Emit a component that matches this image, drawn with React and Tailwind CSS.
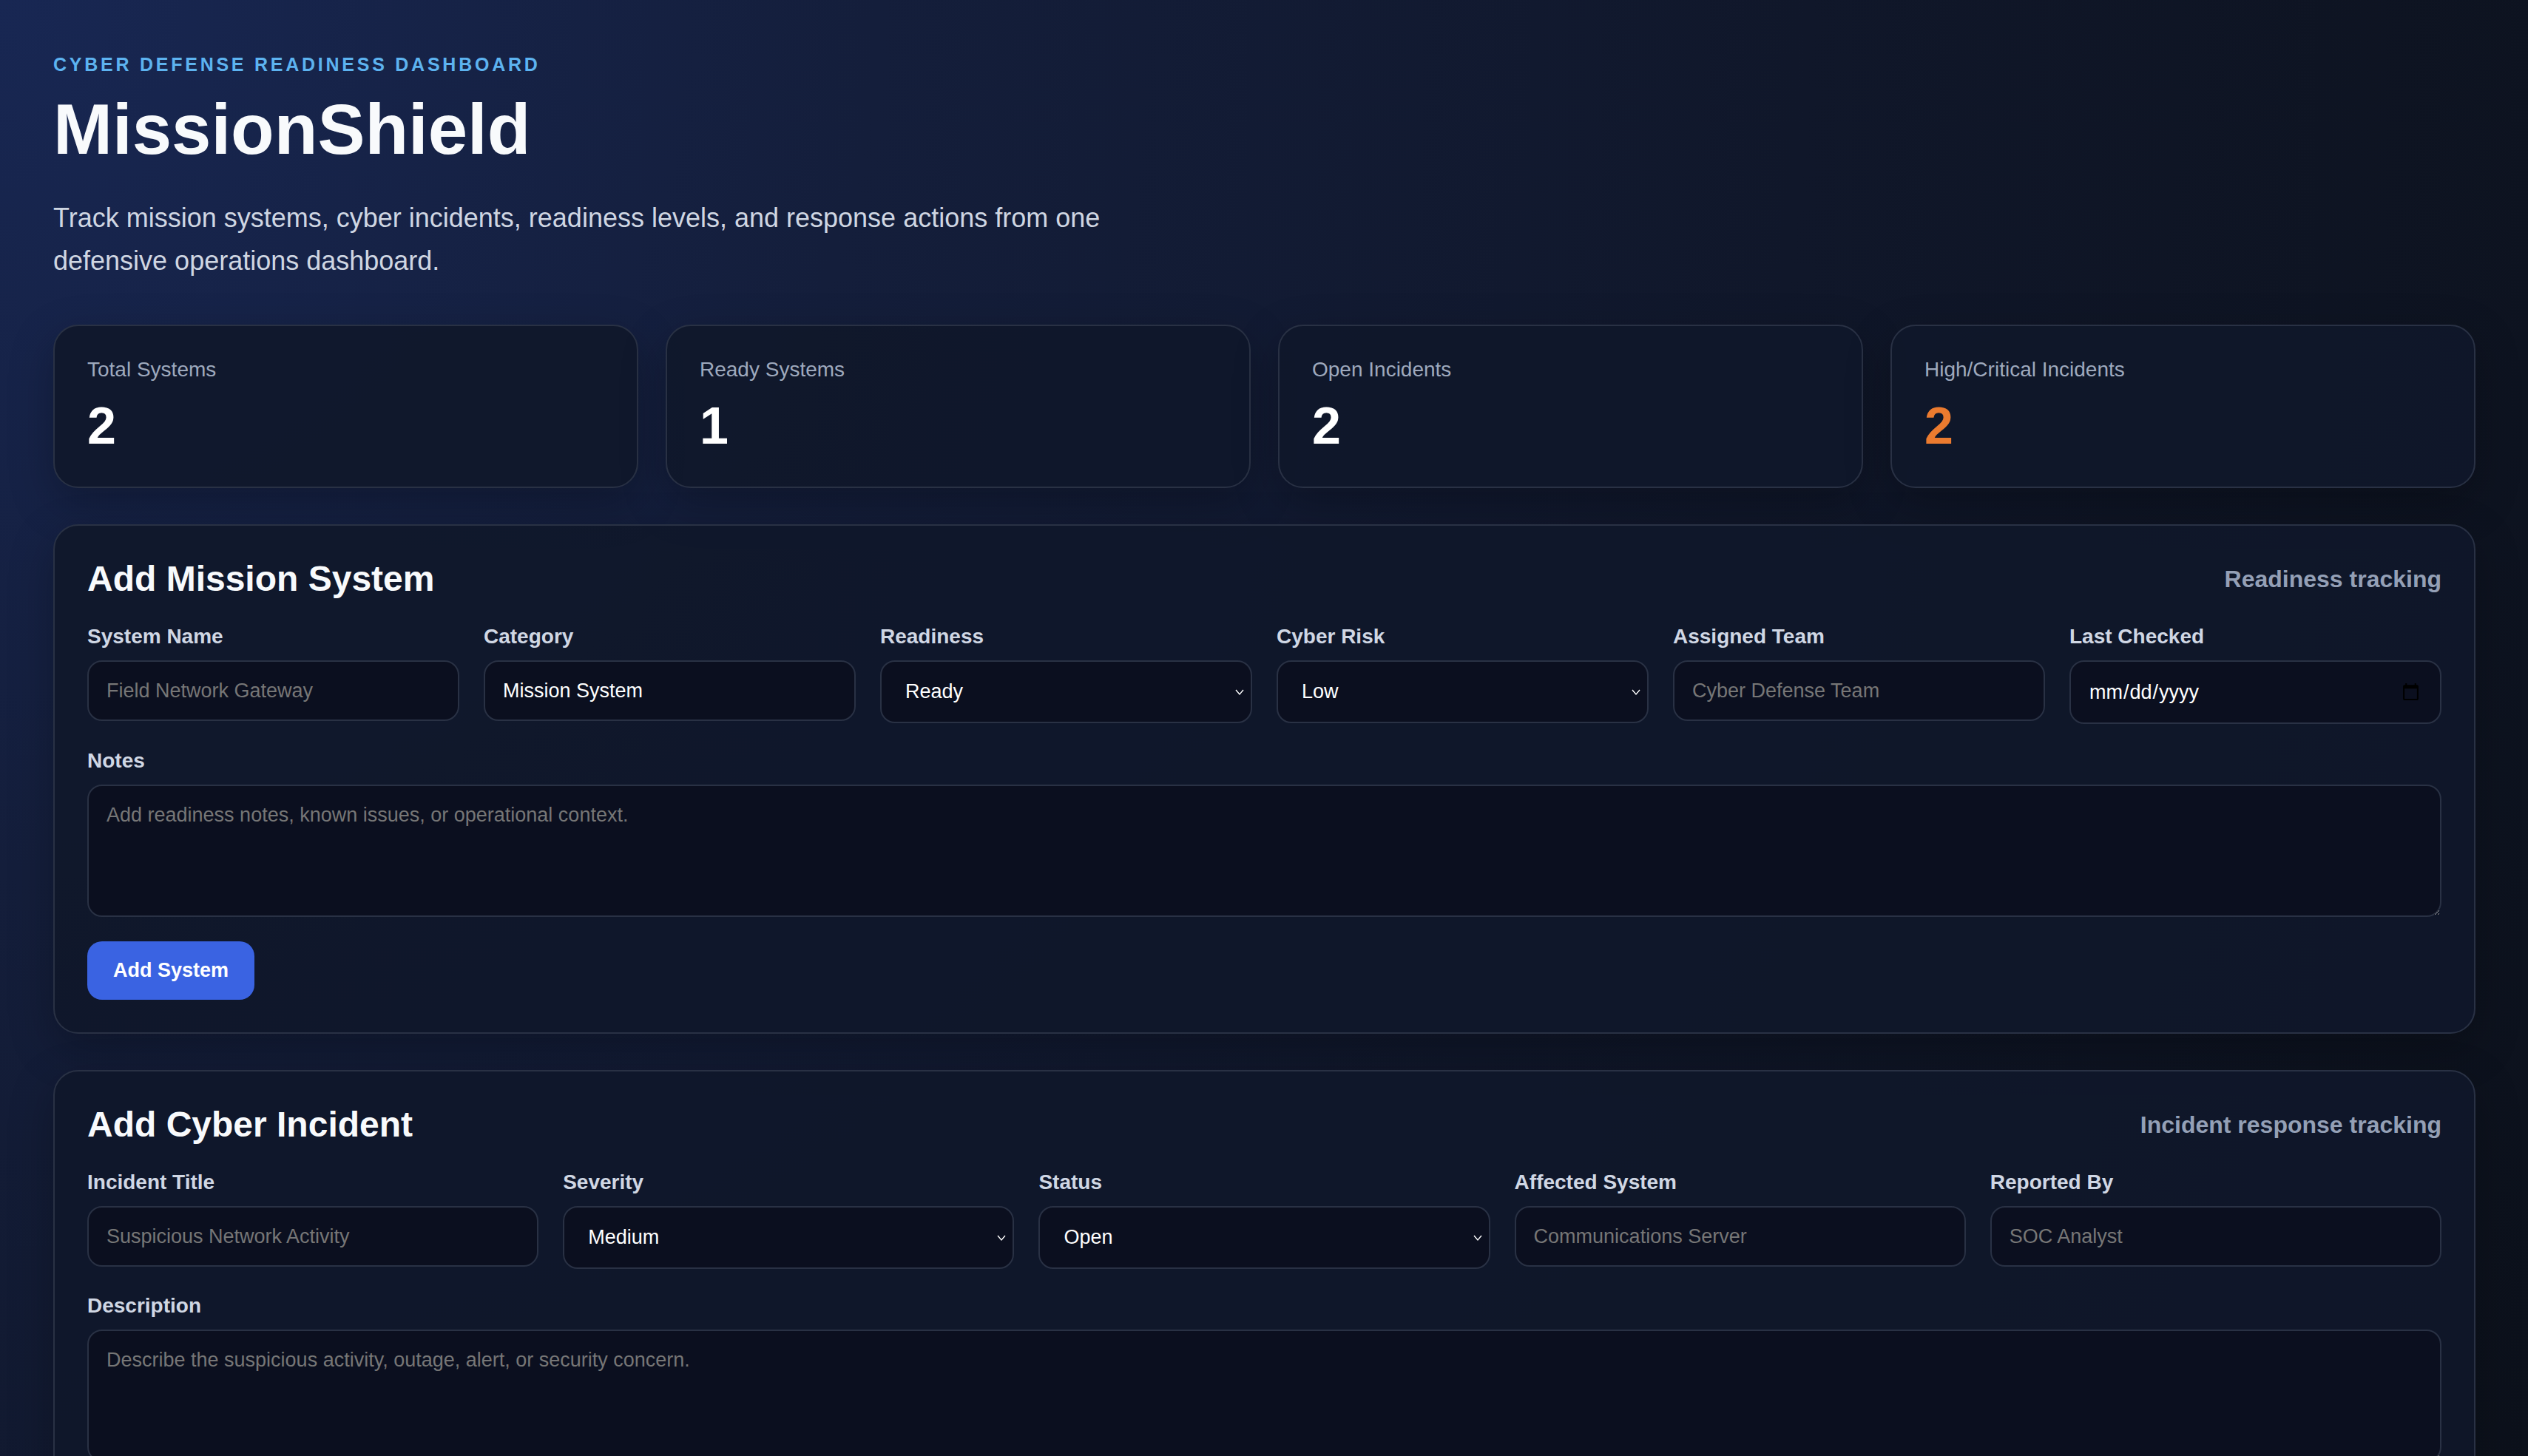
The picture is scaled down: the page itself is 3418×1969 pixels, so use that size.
import { useState } from 'react';

const font = { fontFamily: '"Liberation Sans", Arial, Helvetica, sans-serif' };

const inputCls =
  'h-[82px] w-full rounded-[20px] border-2 border-[#293144] bg-[#0b0f1f] px-[24px] text-[27px] text-white placeholder:text-[#767676] outline-none';
const selectCls =
  'h-[85px] w-full appearance-none rounded-[20px] border-2 border-[#293144] bg-[#0b0f1f] pl-[32px] pr-[40px] text-[27px] text-white outline-none';
const areaCls =
  'block h-[179px] w-full rounded-[20px] border-2 border-[#293144] bg-[#0b0f1f] px-[24px] pb-[24px] pt-[19px] text-[27px] text-white placeholder:text-[#767676] outline-none';
const labelCls = 'mb-[15px] block text-[28px] font-bold leading-[34px] text-[#d0d7e4]';

function StatCard({ label, value, accent }) {
  return (
    <div className="rounded-[34px] border-2 border-[#293144] bg-[#10172a]/90 px-[44px] pb-[47px] pt-[44px] shadow-[0_20px_60px_rgba(0,0,0,0.25)]">
      <p className="text-[28px] leading-[30px] text-[#9ea9bd]">{label}</p>
      <p className={`mt-[26px] text-[70px] font-bold leading-[70px] ${accent ? 'text-[#eb7b2f]' : 'text-white'}`}>
        {value}
      </p>
    </div>
  );
}

function Field({ label, children }) {
  return (
    <div className="flex flex-col">
      <label className={labelCls}>{label}</label>
      {children}
    </div>
  );
}

function Select({ options, ...props }) {
  return (
    <div className="relative">
      <select {...props} className={selectCls}>
        {options.map((o) => (
          <option key={o}>{o}</option>
        ))}
      </select>
      <svg
        className="pointer-events-none absolute right-[11px] top-1/2 h-[10px] w-[12px] -translate-y-1/2"
        viewBox="0 0 12 10"
        fill="none"
        stroke="white"
        strokeWidth="1.4"
      >
        <polyline points="1,2 6,8 11,2" />
      </svg>
    </div>
  );
}

function Panel({ title, tag, children }) {
  return (
    <section className="rounded-[34px] border-2 border-[#293144] bg-[#10172a]/90 p-[44px] shadow-[0_20px_60px_rgba(0,0,0,0.25)]">
      <div className="mb-[33px] flex items-center justify-between">
        <h2 className="text-[48px] font-bold leading-[56px] text-[#f8fafc]">{title}</h2>
        <span className="text-[32px] font-bold text-[#94a0b6]">{tag}</span>
      </div>
      {children}
    </section>
  );
}

export default function App() {
  const [system, setSystem] = useState({
    name: '',
    category: 'Mission System',
    readiness: 'Ready',
    risk: 'Low',
    team: '',
    checked: '',
    notes: '',
  });
  const [incident, setIncident] = useState({
    title: '',
    severity: 'Medium',
    status: 'Open',
    affected: '',
    reporter: '',
    description: '',
  });

  const updSystem = (e) => setSystem((p) => ({ ...p, [e.target.name]: e.target.value }));
  const updIncident = (e) => setIncident((p) => ({ ...p, [e.target.name]: e.target.value }));

  return (
    <div
      style={font}
      className="min-h-screen bg-[radial-gradient(circle_at_0%_0%,#182753_0%,#141e3b_30%,#10172a_62%,#0c111b_100%)] bg-fixed pb-[80px] pl-[72px] pr-[71px] pt-[72px]"
    >
      <p className="text-[25px] font-bold uppercase leading-[30px] tracking-[0.15em] text-[#5db3f0]">
        Cyber Defense Readiness Dashboard
      </p>
      <h1 className="mt-[20px] text-[96px] font-bold leading-[106px] text-[#f8fafc]">MissionShield</h1>
      <p className="mt-[38px] max-w-[1500px] text-[36px] leading-[58px] text-[#cfd6e2]">
        Track mission systems, cyber incidents, readiness levels, and response actions from one defensive
        operations dashboard.
      </p>

      <div className="mt-[57px] grid grid-cols-4 gap-[37px]">
        <StatCard label="Total Systems" value="2" />
        <StatCard label="Ready Systems" value="1" />
        <StatCard label="Open Incidents" value="2" />
        <StatCard label="High/Critical Incidents" value="2" accent />
      </div>

      <div className="mt-[49px] flex flex-col gap-[49px]">
        <Panel title="Add Mission System" tag="Readiness tracking">
          <div className="grid grid-cols-6 gap-x-[33px]">
            <Field label="System Name">
              <input name="name" value={system.name} onChange={updSystem} placeholder="Field Network Gateway" className={inputCls} />
            </Field>
            <Field label="Category">
              <input name="category" value={system.category} onChange={updSystem} className={inputCls} />
            </Field>
            <Field label="Readiness">
              <Select name="readiness" value={system.readiness} onChange={updSystem} options={['Ready', 'Degraded', 'Not Ready']} />
            </Field>
            <Field label="Cyber Risk">
              <Select name="risk" value={system.risk} onChange={updSystem} options={['Low', 'Medium', 'High', 'Critical']} />
            </Field>
            <Field label="Assigned Team">
              <input name="team" value={system.team} onChange={updSystem} placeholder="Cyber Defense Team" className={inputCls} />
            </Field>
            <Field label="Last Checked">
              <input
                type="date"
                name="checked"
                value={system.checked}
                onChange={updSystem}
                className="h-[86px] w-full rounded-[20px] border-2 border-[#293144] bg-[#0b0f1f] px-[24px] text-[27px] text-white outline-none"
              />
            </Field>
          </div>

          <div className="mt-[33px]">
            <label className={labelCls}>Notes</label>
            <textarea
              name="notes"
              value={system.notes}
              onChange={updSystem}
              placeholder="Add readiness notes, known issues, or operational context."
              className={areaCls}
            />
          </div>

          <button className="mt-[33px] h-[79px] rounded-[20px] bg-[#3a63e2] px-[35px] text-[27px] font-bold text-white">
            Add System
          </button>
        </Panel>

        <Panel title="Add Cyber Incident" tag="Incident response tracking">
          <div className="grid grid-cols-5 gap-x-[33px]">
            <Field label="Incident Title">
              <input name="title" value={incident.title} onChange={updIncident} placeholder="Suspicious Network Activity" className={inputCls} />
            </Field>
            <Field label="Severity">
              <Select name="severity" value={incident.severity} onChange={updIncident} options={['Low', 'Medium', 'High', 'Critical']} />
            </Field>
            <Field label="Status">
              <Select name="status" value={incident.status} onChange={updIncident} options={['Open', 'Investigating', 'Contained', 'Resolved']} />
            </Field>
            <Field label="Affected System">
              <input name="affected" value={incident.affected} onChange={updIncident} placeholder="Communications Server" className={inputCls} />
            </Field>
            <Field label="Reported By">
              <input name="reporter" value={incident.reporter} onChange={updIncident} placeholder="SOC Analyst" className={inputCls} />
            </Field>
          </div>

          <div className="mt-[33px]">
            <label className={labelCls}>Description</label>
            <textarea
              name="description"
              value={incident.description}
              onChange={updIncident}
              placeholder="Describe the suspicious activity, outage, alert, or security concern."
              className={areaCls}
            />
          </div>

          <button className="mt-[33px] h-[79px] rounded-[20px] bg-[#3a63e2] px-[35px] text-[27px] font-bold text-white">
            Add Incident
          </button>
        </Panel>
      </div>
    </div>
  );
}
